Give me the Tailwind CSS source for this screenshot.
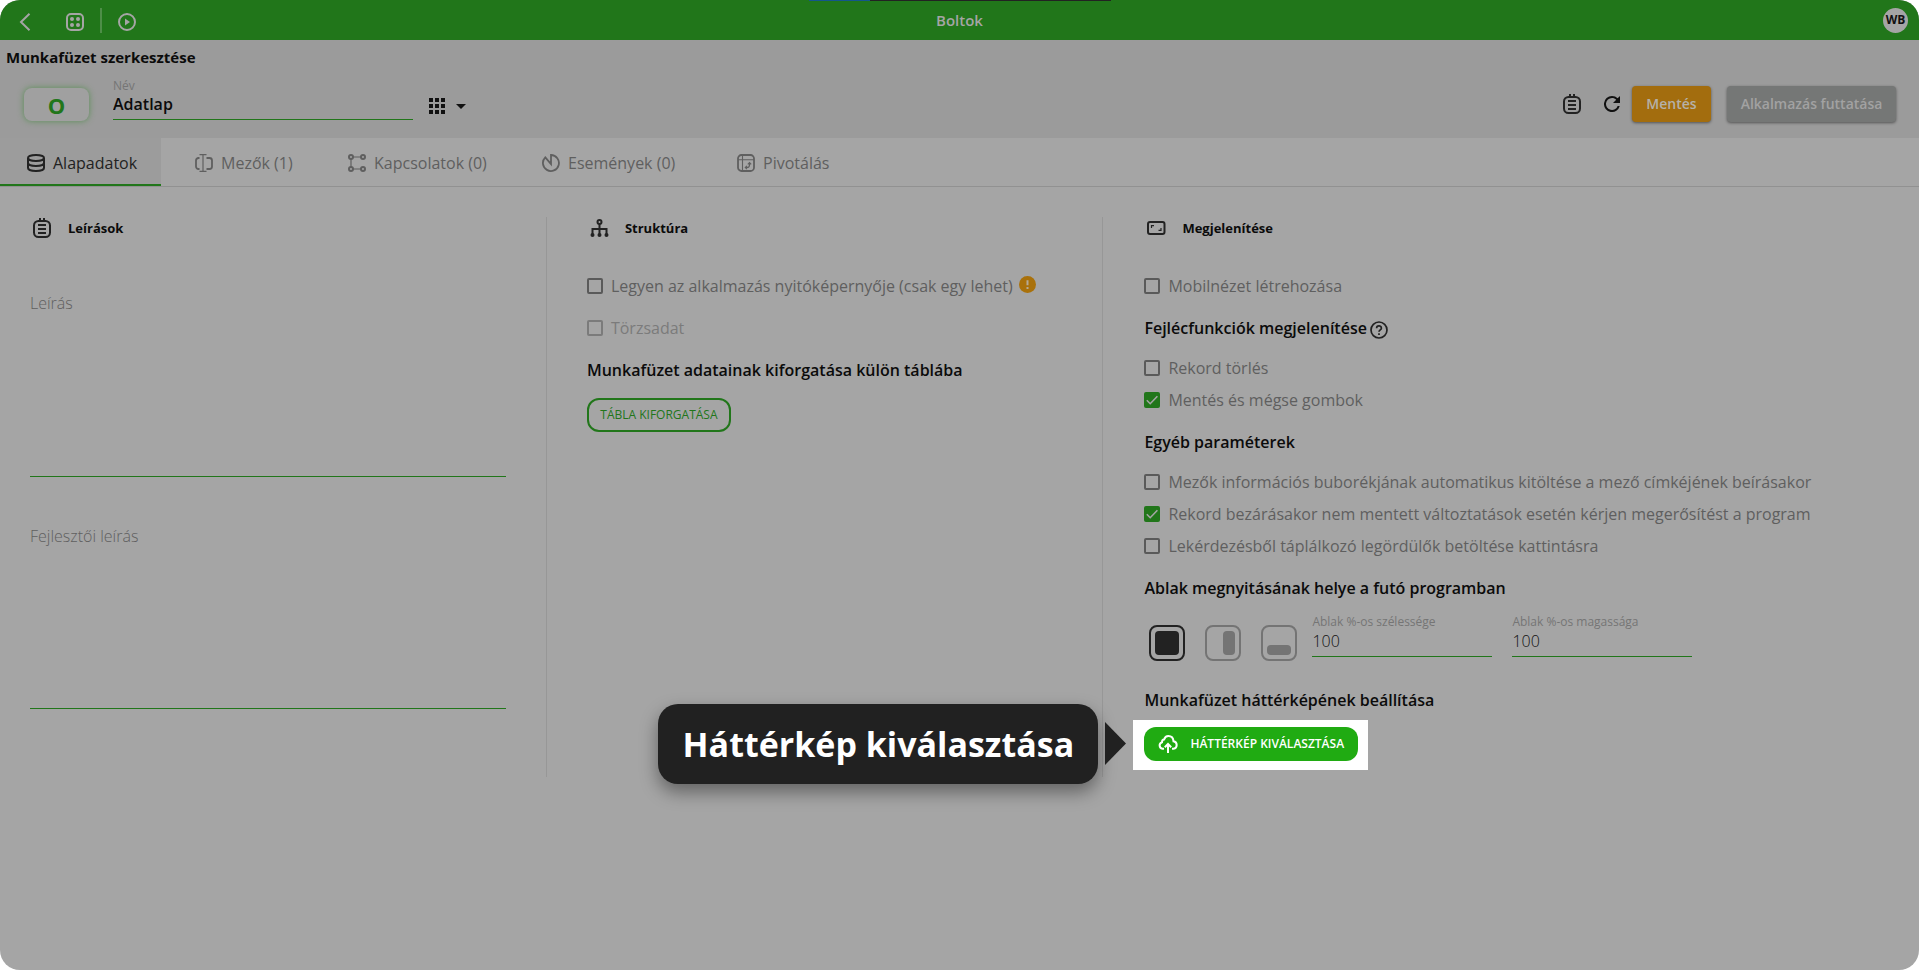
<!DOCTYPE html>
<html lang="hu">
<head>
<meta charset="utf-8">
<meta name="viewport" content="width=device-width, initial-scale=1">
<title>Boltok – Munkafüzet szerkesztése</title>
<script src="https://cdn.jsdelivr.net/npm/@tailwindcss/browser@4"></script>
</head>
<body class="bg-white font-['Open_Sans',sans-serif] text-base leading-6 text-[#0b0b0b]">
<div class="relative flex min-h-screen flex-col overflow-hidden rounded-[20px] bg-[#a5a5a5]">

  <header class="relative grid h-10 grid-cols-[1fr_auto_1fr] items-center bg-[#21761a]">
    <div class="absolute left-1/2 top-0 flex h-px w-[302px] -translate-x-1/2" aria-hidden="true"><span class="w-[61px] bg-[#14568c]"></span><span class="flex-1 bg-[#222]"></span></div>
    <div class="flex items-center pl-4 pt-1">
      <button type="button" aria-label="Vissza" class="size-[18px]"><svg class="size-[18px]" viewBox="0 0 18 18" fill="none" stroke="#a5a5a5" stroke-width="2"><path d="M13.500 0.700L5 9l8.500 8.300"/></svg></button>
      <button type="button" aria-label="Alkalmazások" class="ml-8 size-[18px]"><svg class="size-[18px]" viewBox="0 0 18 18" fill="none" stroke="#a5a5a5" stroke-width="2"><rect x="1" y="1" width="16" height="16" rx="4"/><g fill="#a5a5a5" stroke="none"><circle cx="6" cy="6" r="2"/><circle cx="12" cy="6" r="2"/><circle cx="6" cy="12" r="2"/><circle cx="12" cy="12" r="2"/></g></svg></button>
      <span class="-mt-1 ml-4 h-[25px] w-0.5 bg-[#4e8e48]"></span>
      <button type="button" aria-label="Futtatás" class="ml-4 size-[18px]"><svg class="size-[18px]" viewBox="0 0 18 18" fill="none" stroke="#a5a5a5" stroke-width="2"><circle cx="9" cy="9" r="8"/><path d="M7 5.500v7L12 9z" fill="#a5a5a5" stroke="none"/></svg></button>
    </div>
    <h1 class="text-[15px] font-semibold text-[#a5a5a5]">Boltok</h1>
    <button type="button" class="mr-[11px] size-[25px] justify-self-end rounded-full bg-[#a5a5a5] text-xs font-bold text-[#111]">WB</button>
  </header>

  <section class="flex h-[98px] flex-col bg-[#9b9b9b]">
    <h2 class="pl-1.5 pt-[5px] text-[15px] font-bold">Munkafüzet szerkesztése</h2>
    <div class="flex">
      <button type="button" class="ml-6 mt-[19px] h-[33px] w-[65px] rounded-lg bg-[#a0a0a0] text-[22px] font-bold leading-8 text-[#21761a] shadow-[0_0_6px_#5a8f55]">O</button>
      <div class="ml-6 mt-[9px] flex w-[300px] flex-col">
        <label for="nev" class="text-xs leading-4 text-[#757575]">Név</label>
        <input id="nev" value="Adatlap" class="h-[26px] border-b border-[#21761a] bg-transparent pb-1.5 font-semibold outline-none">
      </div>
      <button type="button" aria-label="Ikon választása" class="ml-4 mt-[29px] flex h-4 items-center gap-[11px]">
        <svg class="size-4" viewBox="0 0 16 16" fill="#111"><path d="M0 0h4v4H0zM6 0h4v4H6zM12 0h4v4h-4zM0 6h4v4H0zM6 6h4v4H6zM12 6h4v4h-4zM0 12h4v4H0zM6 12h4v4H6zM12 12h4v4h-4z"/></svg>
        <svg class="h-[5px] w-2.5" viewBox="0 0 10 5" fill="#111"><path d="M0 0h10L5 5z"/></svg>
      </button>
      <div class="ml-auto mr-[23px] mt-[17px] flex h-9 items-center">
        <button type="button" aria-label="Leírás" class="mr-[22px]"><svg class="h-[21px] w-[19px]" viewBox="0 0 19 21" fill="none" stroke="#222" stroke-width="2"><rect x="1" y="3" width="16" height="16" rx="4.500"/><path d="M7 0v3M11 0v3M5 7h8M5 11h8M5 15h8"/></svg></button>
        <button type="button" aria-label="Frissítés" class="mr-3"><svg class="size-4" viewBox="4 4 16 16" fill="#111"><path d="M17.650 6.350A7.960 7.960 0 0 0 12 4a8 8 0 1 0 7.730 10h-2.080A6 6 0 1 1 12 6c1.660 0 3.140.69 4.220 1.780L13 11h7V4z"/></svg></button>
        <button type="button" class="mr-4 h-9 w-[79px] rounded bg-[#a36d0e] text-sm font-semibold text-[#b5b1a8] shadow-[0_1px_3px_#0007]">Mentés</button>
        <button type="button" class="h-9 w-[169px] rounded bg-[#757776] text-sm font-semibold text-[#a2a2a2] shadow-[0_1px_3px_#0007]">Alkalmazás futtatása</button>
      </div>
    </div>
  </section>

  <nav class="flex h-[49px] border-b border-[#919191] text-[#5f5f5f]">
    <a href="#" aria-current="page" class="flex w-[161px] items-center gap-2 border-b-2 border-[#21761a] bg-[#9c9c9c] pl-[27px] pt-1 text-[#222]">
      <svg class="size-[18px]" viewBox="0 0 18 18" fill="none" stroke="currentColor" stroke-width="2"><ellipse cx="9" cy="4" rx="8" ry="3"/><path d="M1 4v10c0 1.700 3.600 3 8 3s8-1.300 8-3V4M1 9c0 1.700 3.600 3 8 3s8-1.300 8-3"/></svg>Alapadatok</a>
    <a href="#" class="flex w-[153px] items-center gap-2 pl-[34px] pt-0.5">
      <svg class="size-[18px]" viewBox="0 0 18 18" fill="none" stroke="currentColor" stroke-width="1.800"><path d="M4.500 4H3.500A2.500 2.500 0 0 0 1 6.500v6A2.500 2.500 0 0 0 3.500 15h1M11.500 4h3A2.500 2.500 0 0 1 17 6.500v6a2.500 2.500 0 0 1-2.500 2.500h-3"/><path stroke-width="1.200" d="M8 0.500v17M4.500 0.600h7M4.500 17.400h7"/></svg>Mezők (1)</a>
    <a href="#" class="flex w-[194px] items-center gap-2 pl-[34px] pt-0.5">
      <svg class="size-[18px]" viewBox="0 0 18 18" fill="none" stroke="currentColor" stroke-width="2"><circle cx="3" cy="3" r="2"/><circle cx="15" cy="3" r="2"/><circle cx="3" cy="15" r="2"/><circle cx="15" cy="15" r="2"/><path stroke-width="1.200" d="M5 3h8M5 15h8M3 5v8"/></svg>Kapcsolatok (0)</a>
    <a href="#" class="flex w-[195px] items-center gap-2 pl-[34px] pt-0.5">
      <svg class="size-[18px]" viewBox="0 0 18 18" fill="none" stroke="currentColor" stroke-width="1.800"><path d="M9 10V1a8 8 0 1 1-5.700 2.300z"/></svg>Események (0)</a>
    <a href="#" class="flex items-center gap-2 pl-[34px] pt-0.5">
      <svg class="size-[18px]" viewBox="0 0 18 18" fill="none" stroke="currentColor" stroke-width="1.800"><rect x="1" y="1" width="16" height="16" rx="3.500"/><path stroke-width="1.100" d="M1 5.800h16M5.500 1v16"/><path stroke-width="1.200" d="M8.500 13.500h1.500a2.500 2.500 0 0 0 2.500-2.500V8.800M10.800 10.300l1.700-1.700 1.700 1.700M10 11.800l-1.700 1.700 1.700 1.700"/></svg>Pivotálás</a>
  </nav>

  <main class="flex flex-1 items-start pt-[30px] text-[#5f5f5f]">
    <section class="min-h-[560px] w-[28.5%] border-r border-[#979797] pl-[30px] pr-10">
      <h3 class="flex h-[22px] items-center gap-4 pl-[3px] text-[13px] font-bold text-[#0b0b0b]"><svg class="h-[21px] w-[19px]" viewBox="0 0 19 21" fill="none" stroke="#222" stroke-width="2"><rect x="1" y="3" width="16" height="16" rx="4.500"/><path d="M7 0v3M11 0v3M5 7h8M5 11h8M5 15h8"/></svg>Leírások</h3>
      <label for="leiras" class="mt-[52px] block font-light">Leírás</label>
      <textarea id="leiras" class="block h-[162px] w-full resize-none border-b border-[#21761a] bg-transparent outline-none"></textarea>
      <label for="fejlesztoi" class="mt-[47px] block font-light">Fejlesztői leírás</label>
      <textarea id="fejlesztoi" class="block h-[161px] w-full resize-none border-b border-[#21761a] bg-transparent outline-none"></textarea>
    </section>

    <section class="min-h-[560px] w-[29%] border-r border-[#979797] pl-10">
      <h3 class="flex h-[22px] items-center gap-4 pl-[3px] text-[13px] font-bold text-[#0b0b0b]"><svg class="h-[18px] w-[19px]" viewBox="0 0 19 18" fill="none" stroke="#222" stroke-width="2"><circle cx="9.500" cy="3" r="2"/><path d="M9.500 5v10M2.500 15v-5h14v5"/><g fill="#222" stroke="none"><circle cx="2.500" cy="16" r="2"/><circle cx="9.500" cy="16" r="2"/><circle cx="16.500" cy="16" r="2"/></g></svg>Struktúra</h3>
      <div class="mt-[35px] flex items-center whitespace-nowrap">
        <label class="flex items-center gap-2"><input type="checkbox" class="size-4 appearance-none rounded-xs border-2 border-[#5a5a5a]">Legyen az alkalmazás nyitóképernyője (csak egy lehet)</label>
        <svg class="mb-1 ml-1.5 size-[17px]" viewBox="0 0 17 17"><circle cx="8.500" cy="8.500" r="8.500" fill="#a9710b"/><path d="M7.500 4.200h2v5h-2zM7.500 11h2v2h-2z" fill="#b5aa96"/></svg>
      </div>
      <label class="mt-[18px] flex items-center gap-2 text-[#7b7b7b]"><input type="checkbox" disabled class="size-4 appearance-none rounded-xs border-2 border-[#7b7b7b]">Törzsadat</label>
      <h4 class="mt-[18px] font-semibold text-[#0b0b0b]">Munkafüzet adatainak kiforgatása külön táblába</h4>
      <button type="button" class="mt-4 h-[34px] w-36 rounded-xl border-2 border-[#21761a] text-xs text-[#21761a]">TÁBLA KIFORGATÁSA</button>
    </section>

    <section class="flex-1 pl-[41px]">
      <h3 class="flex h-[22px] items-center gap-4 pl-[3px] text-[13px] font-bold text-[#0b0b0b]"><svg class="h-[14px] w-[19px]" viewBox="0 0 19 14" fill="none" stroke="#222" stroke-width="2"><rect x="1" y="1" width="16.500" height="12" rx="2"/><path stroke-width="1.200" d="M4.500 7V4.600h2.500M14 7v2.400h-2.500"/></svg>Megjelenítése</h3>
      <label class="mt-[35px] flex items-center gap-2"><input type="checkbox" class="size-4 appearance-none rounded-xs border-2 border-[#5a5a5a]">Mobilnézet létrehozása</label>
      <h4 class="mt-[18px] flex items-center gap-[3px] font-semibold text-[#0b0b0b]">Fejlécfunkciók megjelenítése<svg class="mt-1 size-[18px]" viewBox="0 0 18 18" fill="none" stroke="#222" stroke-width="1.700"><circle cx="9" cy="9" r="8"/><path d="M6.600 7.200c0-3 4.800-3 4.800 0 0 1.700-2.400 1.700-2.400 3.600M9 12.200v1.700"/></svg></h4>
      <div class="mt-4 flex flex-col gap-2">
        <label class="flex items-center gap-2"><input type="checkbox" class="size-4 appearance-none rounded-xs border-2 border-[#5a5a5a]">Rekord törlés</label>
        <label class="flex items-center gap-2"><span class="relative flex size-4"><input type="checkbox" checked class="size-4 appearance-none rounded-xs bg-[#21761a]"><svg class="pointer-events-none absolute inset-0 size-4" viewBox="0 0 16 16" fill="none" stroke="#a5a5a5" stroke-width="1.600"><path d="M2.800 8.300l3.400 3.400 7.200-7.500"/></svg></span>Mentés és mégse gombok</label>
      </div>
      <h4 class="mt-[18px] font-semibold text-[#0b0b0b]">Egyéb paraméterek</h4>
      <div class="mt-4 flex flex-col gap-2">
        <label class="flex items-center gap-2"><input type="checkbox" class="size-4 appearance-none rounded-xs border-2 border-[#5a5a5a]">Mezők információs buborékjának automatikus kitöltése a mező címkéjének beírásakor</label>
        <label class="flex items-center gap-2"><span class="relative flex size-4"><input type="checkbox" checked class="size-4 appearance-none rounded-xs bg-[#21761a]"><svg class="pointer-events-none absolute inset-0 size-4" viewBox="0 0 16 16" fill="none" stroke="#a5a5a5" stroke-width="1.600"><path d="M2.800 8.300l3.400 3.400 7.200-7.500"/></svg></span>Rekord bezárásakor nem mentett változtatások esetén kérjen megerősítést a program</label>
        <label class="flex items-center gap-2"><input type="checkbox" class="size-4 appearance-none rounded-xs border-2 border-[#5a5a5a]">Lekérdezésből táplálkozó legördülők betöltése kattintásra</label>
      </div>
      <h4 class="mt-[18px] font-semibold text-[#0b0b0b]">Ablak megnyitásának helye a futó programban</h4>
      <div class="mt-[14px] flex">
        <div class="mt-[11px] flex gap-5 pl-[5px]">
          <button type="button" aria-label="Teljes ablak" class="size-9"><svg viewBox="0 0 36 36"><rect x="1" y="1" width="34" height="34" rx="7" fill="none" stroke="#222" stroke-width="2"/><rect x="6" y="6" width="24" height="24" rx="4" fill="#222"/></svg></button>
          <button type="button" aria-label="Jobb oldal" class="size-9"><svg viewBox="0 0 36 36"><rect x="1" y="1" width="34" height="34" rx="7" fill="none" stroke="#747474" stroke-width="2"/><rect x="18" y="6" width="12" height="24" rx="4" fill="#747474"/></svg></button>
          <button type="button" aria-label="Alsó rész" class="size-9"><svg viewBox="0 0 36 36"><rect x="1" y="1" width="34" height="34" rx="7" fill="none" stroke="#747474" stroke-width="2"/><rect x="6" y="20" width="24" height="10" rx="4" fill="#747474"/></svg></button>
        </div>
        <div class="ml-[15px] flex w-[180px] flex-col">
          <label for="szelesseg" class="text-xs leading-4 text-[#757575]">Ablak %-os szélessége</label>
          <input id="szelesseg" value="100" class="h-[27px] border-b border-[#21761a] bg-transparent pb-1 font-light text-[#111] outline-none">
        </div>
        <div class="ml-5 flex w-[180px] flex-col">
          <label for="magassag" class="text-xs leading-4 text-[#757575]">Ablak %-os magassága</label>
          <input id="magassag" value="100" class="h-[27px] border-b border-[#21761a] bg-transparent pb-1 font-light text-[#111] outline-none">
        </div>
      </div>
      <h4 class="mt-[27px] font-semibold text-[#0b0b0b]">Munkafüzet háttérképének beállítása</h4>
      <div class="relative -ml-[11px] mt-2 h-[50px] w-fit bg-white pl-[11px] pr-2.5 pt-[7px]">
        <button type="button" class="flex h-[34px] w-[214px] items-center gap-3 rounded-xl bg-[#20ab12] pl-3.5 text-xs font-semibold text-white">
          <svg class="h-[18px] w-5" viewBox="0 0 20 18" fill="none" stroke="#fff" stroke-width="2"><path d="M6 13.800H4.500A3.400 3.400 0 0 1 4 7.200C4 5.500 5 4.600 6 4.600 6.700 2.500 8.200 1 10.300 1c3 0 5 2.200 5.200 5.300A3.800 3.800 0 0 1 15.500 13.800H14M10 18V10M6.800 12.300L10 9l3.200 3.300"/></svg>HÁTTÉRKÉP KIVÁLASZTÁSA</button>
        <div role="tooltip" class="absolute right-[270px] -top-4 flex h-20 w-[440px] items-center justify-center whitespace-nowrap rounded-[20px] bg-[#212121] text-[34px] font-bold text-white shadow-[0_8px_18px_#0006]">Háttérkép kiválasztása</div>
        <svg class="absolute right-[242px] top-0.5 h-[43px] w-[21px]" viewBox="0 0 21 43" fill="#212121"><path d="M0 0l21 21.500L0 43z"/></svg>
      </div>
    </section>
  </main>
</div>
</body>
</html>
